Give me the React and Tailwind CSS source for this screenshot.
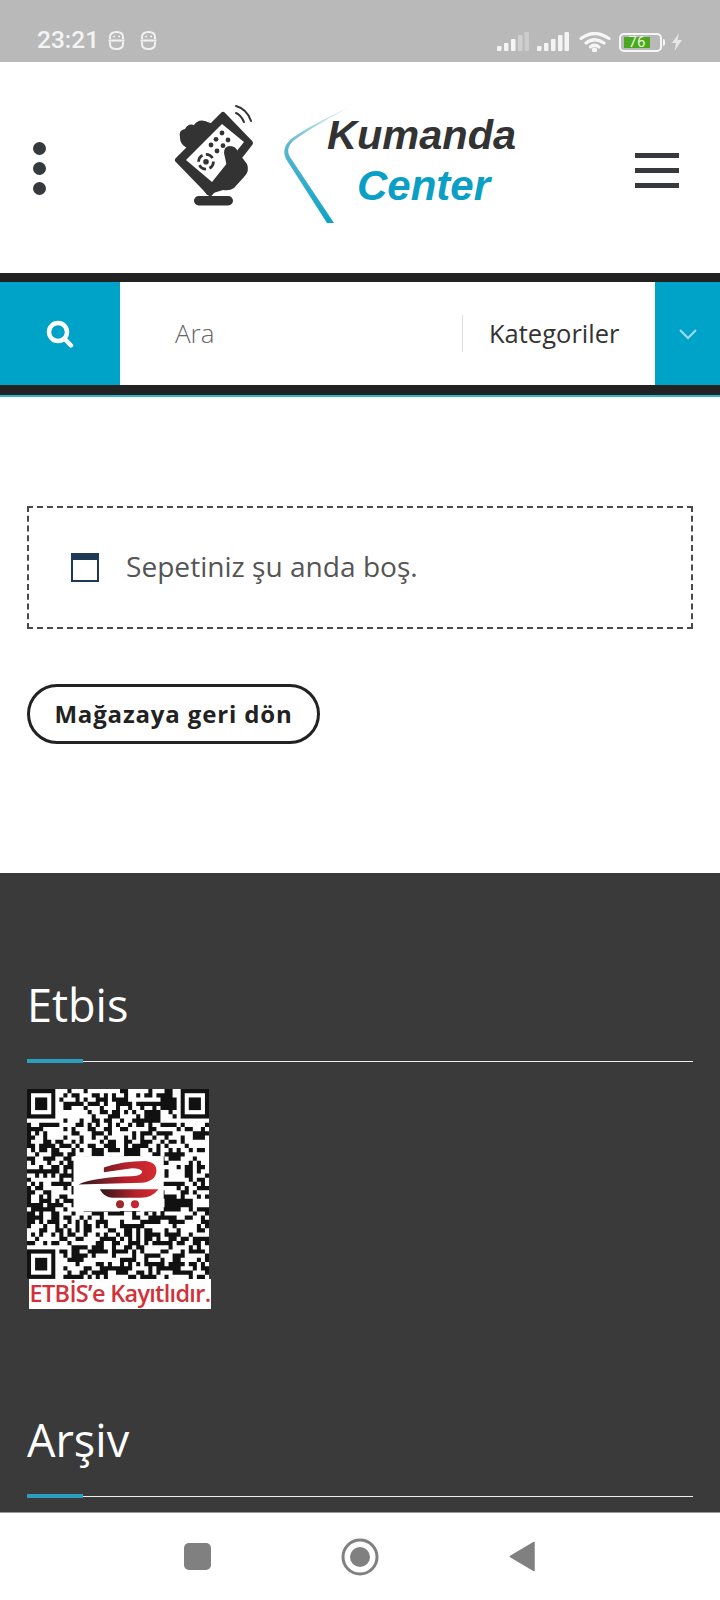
import React from 'react'

const QR_SIZE = 45

// pseudo random modules, the real code can't be read from the picture anyway
function qrPath() {
  let seed = 1337
  let d = ''
  const inFinder = (x, y) =>
    (x < 8 && y < 8) || (x > QR_SIZE - 9 && y < 8) || (x < 8 && y > QR_SIZE - 9)
  for (let y = 0; y < QR_SIZE; y++) {
    for (let x = 0; x < QR_SIZE; x++) {
      seed = (seed * 1103515245 + 12345) & 0x7fffffff
      if (inFinder(x, y)) continue
      if ((seed >> 16) % 100 < 47) d += `M${x} ${y}h1v1h-1z`
    }
  }
  return d
}

function Finder({ x, y }) {
  return (
    <g>
      <rect x={x} y={y} width="7" height="7" fill="#111" />
      <rect x={x + 1} y={y + 1} width="5" height="5" fill="#fff" />
      <rect x={x + 2} y={y + 2} width="3" height="3" fill="#111" />
    </g>
  )
}

function QrCode() {
  return (
    <svg width="182" height="190" viewBox={`0 0 ${QR_SIZE} 47`} preserveAspectRatio="none" className="block">
      <defs>
        <linearGradient id="cartTop" x1="0" y1="0" x2="1" y2="0">
          <stop offset="0" stopColor="#2a1a1a" />
          <stop offset="0.6" stopColor="#b3212b" />
          <stop offset="1" stopColor="#d62a32" />
        </linearGradient>
      </defs>
      <rect width={QR_SIZE} height="47" fill="#fff" />
      <g transform="scale(1 1.044)">
        <path d={qrPath()} fill="#111" />
        <Finder x={0} y={0} />
        <Finder x={QR_SIZE - 7} y={0} />
        <Finder x={0} y={QR_SIZE - 7} />
      </g>
      <rect x="11.5" y="16.6" width="22.3" height="13.6" fill="#fff" />
      <path d="M19 19.4 Q24 17.8 29 17.8 Q32 18 32 20.2 Q32 22.6 28.5 23.2 L12.7 23.6 Q17 21.8 26 21.6 Q28.5 21.4 28.5 20.4 Q28 19.6 26 19.6 L19 20.6 Z" fill="url(#cartTop)" />
      <path d="M18 24.8 L32.5 24.8 Q31 26.9 28 26.9 L21 26.9 Q19 26.7 18 24.8 Z" fill="url(#cartTop)" />
      <circle cx="23" cy="28.5" r="1" fill="#9c2a2a" />
      <circle cx="26.7" cy="28.5" r="1" fill="#c5252e" />
    </svg>
  )
}

function RemoteIcon() {
  return (
    <svg width="90" height="106" viewBox="0 0 90 106" className="block shrink-0 -mt-[13px]">
      {/* fingers behind the remote */}
      <path d="M15 38 Q13 30 20 29 Q23 23 29 25 Q33 19 40 21 L48 24 L22 48 Q15 44 15 38Z" fill="#333" />
      {/* body */}
      <path d="M58 15 L85 43 L78 52 L45 93 L13 60 Z" fill="#333" stroke="#333" strokeWidth="6" strokeLinejoin="round" />
      <path d="M57 24 L79 42 L47 82 L21 60 Z" fill="#fff" />
      <g fill="#333">
        <circle cx="57" cy="33" r="2.4" />
        <circle cx="51" cy="39.3" r="2.4" />
        <circle cx="63" cy="40" r="2.4" />
        <circle cx="46" cy="45" r="2.4" />
        <circle cx="58" cy="45.7" r="2.4" />
        <circle cx="52" cy="51" r="2.4" />
        <circle cx="41" cy="61.7" r="2.8" />
      </g>
      <circle cx="41" cy="61.7" r="7.4" fill="none" stroke="#333" strokeWidth="2.8" strokeDasharray="8 3.5" />
      {/* hand */}
      <path d="M59 53 Q59 46 65 46 Q71 46 73 52 L82 64 Q85 71 79 77 L69 88 Q65 91 58 90 L42 95 L36 86 L47 83 L62 67 Z" fill="#333" />
      {/* signal */}
      <path d="M71 6 Q82 9 86 21 M71 13 Q76 15 79 22" fill="none" stroke="#333" strokeWidth="2" strokeLinecap="round" />
      <rect x="29" y="96" width="39" height="9.5" rx="4.7" fill="#333" />
    </svg>
  )
}

function Logo() {
  return (
    <div className="flex items-start ml-[119px]">
      <RemoteIcon />
      <svg width="76" height="122" viewBox="0 0 76 122" className="block shrink-0 ml-[25px] -mt-[9px]">
        <defs>
          <linearGradient id="swoosh" x1="0.6" y1="0" x2="0.5" y2="1">
            <stop offset="0" stopColor="#e4f2f6" />
            <stop offset="0.4" stopColor="#5cb7cf" />
            <stop offset="1" stopColor="#0ba3c7" />
          </linearGradient>
        </defs>
        <path
          d="M76 0 C48 13 24 25 11 35 Q1 44 6 55 L47 119 L54 119 L10 53 Q5 45 13 37 C28 26 52 12 76 0Z"
          fill="url(#swoosh)"
        />
      </svg>
      <div className="-ml-[29px] font-['Liberation_Sans',sans-serif] font-bold italic leading-none">
        <div className="text-[#333] text-[41.5px] leading-[40px] mt-[2px]">Kumanda</div>
        <div className="text-[#0aa0c5] text-[42px] leading-[40px] ml-[30px] mt-[11px]">Center</div>
      </div>
    </div>
  )
}

function Signal({ faded }) {
  return (
    <svg width="32" height="20" viewBox="0 0 32 20" className="block">
      <rect x="0" y="14" width="4.5" height="5" rx="1" fill="#f4f4f4" />
      <rect x="7" y="11" width="4.5" height="8" rx="1" fill="#f4f4f4" />
      <rect x="14" y="7" width="4.5" height="12" rx="1" fill="#f4f4f4" />
      <rect x="21" y="3" width="4.5" height="16" rx="1" fill={faded ? '#d0d0d0' : '#f4f4f4'} />
      <rect x="27.5" y="0" width="4.5" height="19" rx="1" fill={faded ? '#cccccc' : '#f4f4f4'} />
    </svg>
  )
}

function SimIcon() {
  return (
    <svg width="17" height="19" viewBox="0 0 17 19" className="block" fill="none" stroke="#f2f2f2" strokeWidth="2">
      <path d="M2 8 V6 Q2 1 8.5 1 Q15 1 15 6 V8" />
      <path d="M2 11 V13 Q2 18 8.5 18 Q15 18 15 13 V11" />
      <path d="M0.5 9.5 H16.5" />
      <path d="M5 5.5 H7 M10 5.5 H12" strokeWidth="1.6" />
    </svg>
  )
}

function StatusBar() {
  return (
    <div className="h-[62px] bg-[#b9b9b9] flex items-end justify-between pb-[10px] pl-[37px] pr-[37px] shrink-0">
      <div className="flex items-center">
        <span className="font-['Roboto',sans-serif] font-medium text-[24.5px] leading-[24px] text-[#f4f4f4]">23:21</span>
        <div className="ml-[9px] mr-[15px]"><SimIcon /></div>
        <SimIcon />
      </div>
      <div className="flex items-center">
        <Signal faded />
        <div className="ml-[8px]"><Signal /></div>
        <svg width="32" height="20" viewBox="0 0 32 20" className="block ml-[10px]" fill="none" stroke="#f6f6f6" strokeWidth="3.2" strokeLinecap="round">
          <path d="M2 6.5 Q15.5 -3.5 30 6.5" />
          <path d="M7 11 Q15.5 4.5 25 11" />
          <path d="M11.5 15 Q15.5 11.5 20 15" />
          <circle cx="15.5" cy="18" r="1" fill="#f6f6f6" />
        </svg>
        <div className="ml-[8px] w-[43px] h-[19px] rounded-[5px] border-2 border-[#f6f6f6] pl-[3px] py-[2px] flex">
          <div className="w-[26px] h-full bg-[#4aa81e] flex items-center justify-center font-['Roboto',sans-serif] text-[15px] leading-none text-[#e8f6dc]">
            76
          </div>
        </div>
        <div className="ml-[1px] w-[2px] h-[7px] bg-[#f6f6f6] rounded-r" />
        <svg width="12" height="18" viewBox="0 0 12 18" className="block ml-[6px]">
          <path d="M8 0 L1 10 H5 L3.5 18 L11 7 H6.5 Z" fill="#e6e6e6" />
        </svg>
      </div>
    </div>
  )
}

function SearchBar() {
  return (
    <div className="shrink-0 bg-[#222] py-[9px] border-b-2 border-[#2fb4d2] h-[124px]">
      <div className="h-[103px] bg-white flex items-stretch">
        <div className="w-[120px] bg-[#00a3c8] flex items-center justify-center">
          <svg width="28" height="28" viewBox="0 0 28 28" fill="none" stroke="#fff" strokeWidth="4.4" strokeLinecap="round">
            <circle cx="12" cy="12" r="9" />
            <path d="M18.8 19 L25 25.5" />
          </svg>
        </div>
        <div className="flex-1 flex items-center pl-[55px] font-['Open_Sans',sans-serif] text-[26px] font-light text-[#666]">
          Ara
        </div>
        <div className="flex items-center">
          <div className="w-[1px] h-[37px] bg-[#ddd]" />
          <div className="w-[192px] pl-[26px] font-['Open_Sans',sans-serif] text-[25.5px] text-[#333]">Kategoriler</div>
        </div>
        <div className="w-[65px] bg-[#00a3c8] flex items-center justify-center">
          <svg width="18" height="12" viewBox="0 0 18 12" fill="none" stroke="#9fdcec" strokeWidth="2">
            <path d="M1 2 L9 10 L17 2" />
          </svg>
        </div>
      </div>
    </div>
  )
}

function WidgetTitle({ children, className }) {
  return (
    <div className={className}>
      <h3 className="font-['Open_Sans',sans-serif] font-normal text-[45px] leading-[58px] text-white">{children}</h3>
      <div className="relative mt-[27px] h-[1px] bg-[#eee]">
        <div className="absolute left-0 -top-[2px] h-[4px] w-[56px] bg-[#2b9fbd]" />
      </div>
    </div>
  )
}

export default function App() {
  return (
    <div className="h-[1600px] w-[720px] overflow-hidden flex flex-col bg-white font-['Open_Sans',sans-serif]">
      <StatusBar />

      <header className="h-[211px] shrink-0 flex pl-[33px] pr-[41px] pt-[51px]">
        <div className="flex flex-col gap-[7px] pt-[29px] w-[13px] shrink-0">
          <span className="block w-[13px] h-[13px] rounded-full bg-[#36393e]" />
          <span className="block w-[13px] h-[13px] rounded-full bg-[#36393e]" />
          <span className="block w-[13px] h-[13px] rounded-full bg-[#36393e]" />
        </div>
        <Logo />
        <div className="ml-auto flex flex-col gap-[10px] pt-[40px] w-[44px]">
          <span className="block h-[5px] bg-[#36393e]" />
          <span className="block h-[5px] bg-[#36393e]" />
          <span className="block h-[5px] bg-[#36393e]" />
        </div>
      </header>

      <SearchBar />

      <main className="h-[476px] shrink-0 px-[27px] pt-[109px]">
        <div className="h-[123px] border-2 border-dashed border-[#4a4a4a] flex items-center pl-[42px]">
          <svg width="28" height="29" viewBox="0 0 28 29" className="block shrink-0">
            <rect x="1" y="1" width="26" height="27" fill="#fff" stroke="#1f3a57" strokeWidth="2" />
            <rect x="1" y="1" width="26" height="6" fill="#1f3a57" />
          </svg>
          <p className="ml-[27px] -mt-[2px] text-[28.1px] leading-none text-[#555]">Sepetiniz şu anda boş.</p>
        </div>
        <button className="mt-[55px] h-[60px] w-[293px] rounded-full border-[3px] border-[#222] text-[24px] font-bold tracking-[0.85px] text-[#222] flex items-center justify-center">
          Mağazaya geri dön
        </button>
      </main>

      <footer className="flex-1 bg-[#3a3a3a] px-[27px] pt-[103px] overflow-hidden">
        <WidgetTitle>Etbis</WidgetTitle>
        <div className="-mt-[1px] pt-[28px] w-[184px]">
          <QrCode />
          <div className="ml-[2px] h-[30px] bg-white flex items-center justify-center whitespace-nowrap text-[23.5px] font-semibold tracking-[-0.7px] text-[#d2313a]">
            ETBİS’e Kayıtlıdır.
          </div>
        </div>
        <WidgetTitle className="mt-[102px]">Arşiv</WidgetTitle>
      </footer>

      <nav className="h-[88px] shrink-0 border-t border-[#999] flex items-center bg-white pl-[184px]">
        <span className="block w-[27px] h-[27px] rounded-[5px] bg-[#808080]" />
        <svg width="38" height="38" viewBox="0 0 38 38" className="block ml-[130px]">
          <circle cx="19" cy="19" r="17" fill="none" stroke="#808080" strokeWidth="3" />
          <circle cx="19" cy="19" r="10" fill="#808080" />
        </svg>
        <svg width="26" height="31" viewBox="0 0 26 31" className="block ml-[130px]">
          <path d="M25 1.5 V29.5 L1.5 15.5 Z" fill="#808080" stroke="#808080" strokeLinejoin="round" strokeWidth="1.5" />
        </svg>
      </nav>
    </div>
  )
}
